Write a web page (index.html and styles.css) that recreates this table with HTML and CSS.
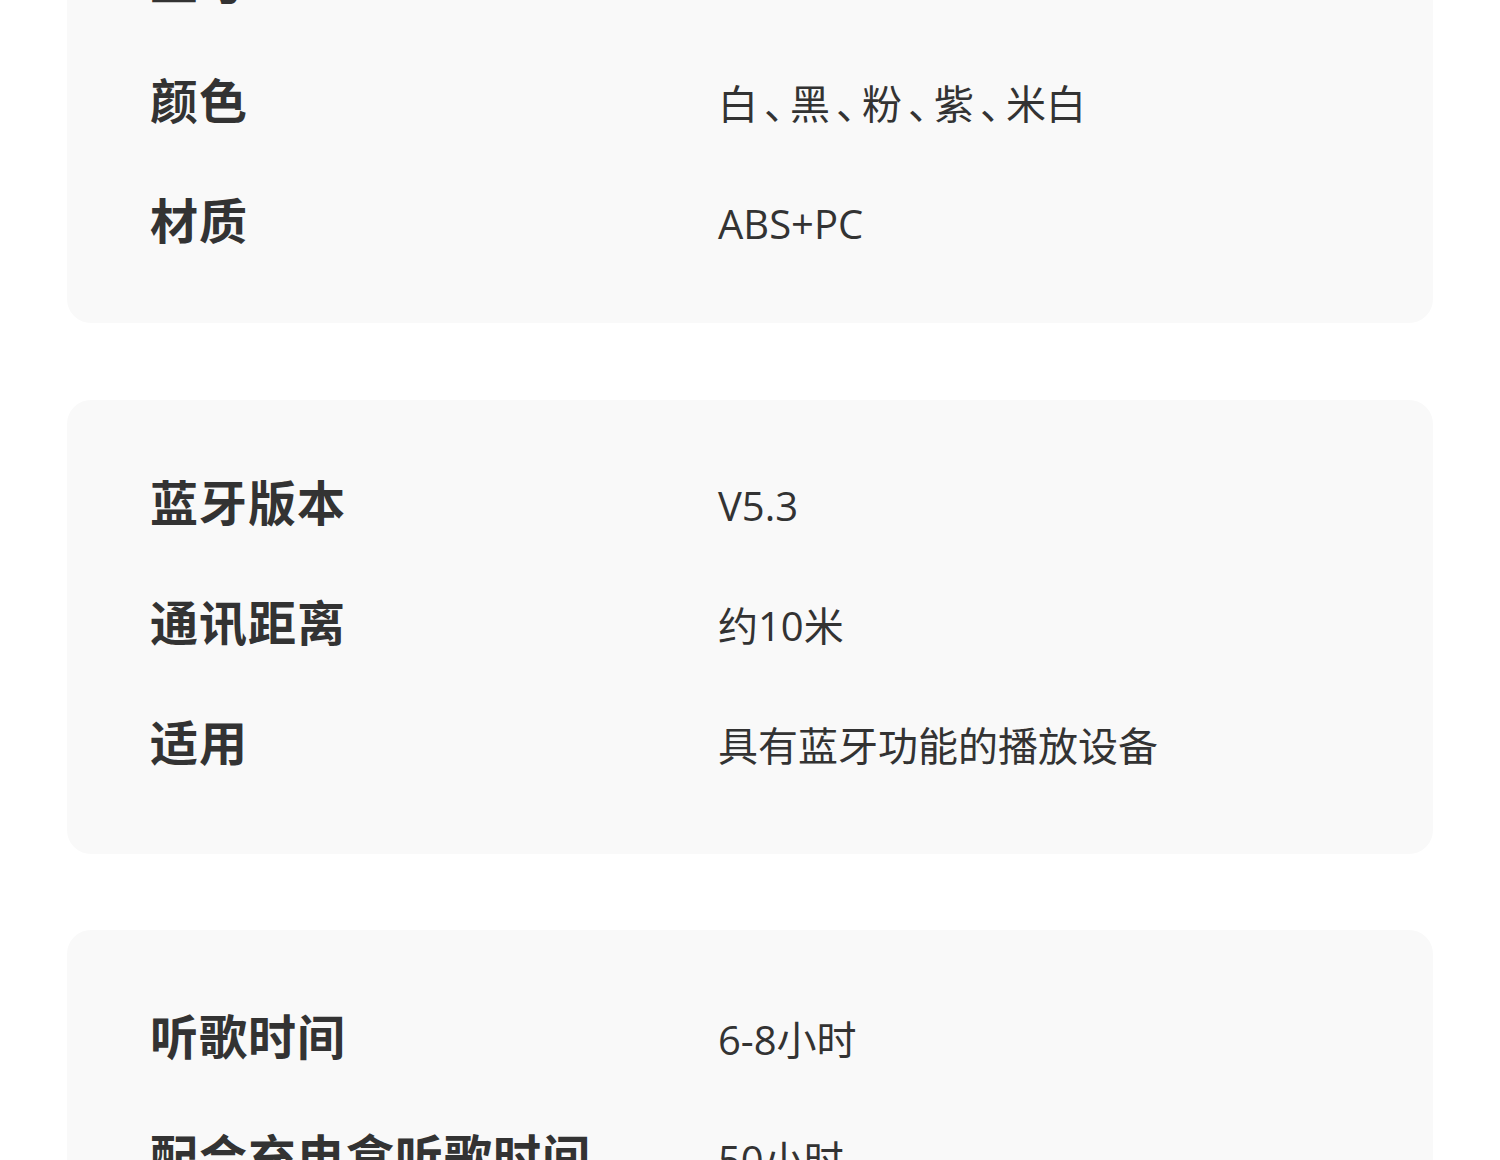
FILE: index.html
```html
<!DOCTYPE html>
<html lang="zh-CN">
<head>
<meta charset="utf-8">
<title>产品参数</title>
<link rel="stylesheet" href="styles.css">
</head>
<body>
<main class="page">
  <section class="card card-first">
    <div class="row"><div class="label">型号</div><div class="value">TWS</div></div>
    <div class="row"><div class="label">颜色</div><div class="value">白<span class="sep">、</span>黑<span class="sep">、</span>粉<span class="sep">、</span>紫<span class="sep">、</span>米白</div></div>
    <div class="row"><div class="label">材质</div><div class="value">ABS+PC</div></div>
  </section>
  <section class="card">
    <div class="row"><div class="label">蓝牙版本</div><div class="value">V5.3</div></div>
    <div class="row"><div class="label">通讯距离</div><div class="value">约10米</div></div>
    <div class="row"><div class="label">适用</div><div class="value">具有蓝牙功能的播放设备</div></div>
  </section>
  <section class="card card-last">
    <div class="row"><div class="label">听歌时间</div><div class="value">6-8小时</div></div>
    <div class="row"><div class="label">配合充电盒听歌时间</div><div class="value">50小时</div></div>
    <div class="row"><div class="label">充电时间</div><div class="value">约1.5小时</div></div>
  </section>
</main>
</body>
</html>
```

FILE: styles.css
```css
html, body {
  margin: 0;
  padding: 0;
  background: #ffffff;
}

body {
  overflow: hidden;
  font-family: "Open Sans", "Noto Sans CJK SC", sans-serif;
  color: #333333;
}

.page {
  display: flex;
  flex-direction: column;
  gap: 76px;
  padding: 0 67px;
  margin-top: -122px;
}

.card {
  background: #f9f9f9;
  border-radius: 24px;
  padding: 40px 83px 54px;
}

.card-first {
  padding-bottom: 45px;
  margin-bottom: 1px;
}

.card-last {
  padding-top: 44px;
}

.row {
  display: grid;
  grid-template-columns: 568px 1fr;
  align-items: baseline;
  height: 120px;
}

.label {
  font-family: "Noto Sans CJK SC", sans-serif;
  font-weight: 700;
  font-size: 48px;
  line-height: 120px;
  letter-spacing: 1px;
  color: #333333;
  white-space: nowrap;
}

.value {
  font-family: "Open Sans", "Noto Sans CJK SC", sans-serif;
  font-weight: 400;
  font-size: 40px;
  line-height: 120px;
  color: #333333;
  white-space: nowrap;
}

.sep {
  font-family: "Noto Sans CJK SC", sans-serif;
  padding-left: 6px;
  letter-spacing: -14px;
}
```
